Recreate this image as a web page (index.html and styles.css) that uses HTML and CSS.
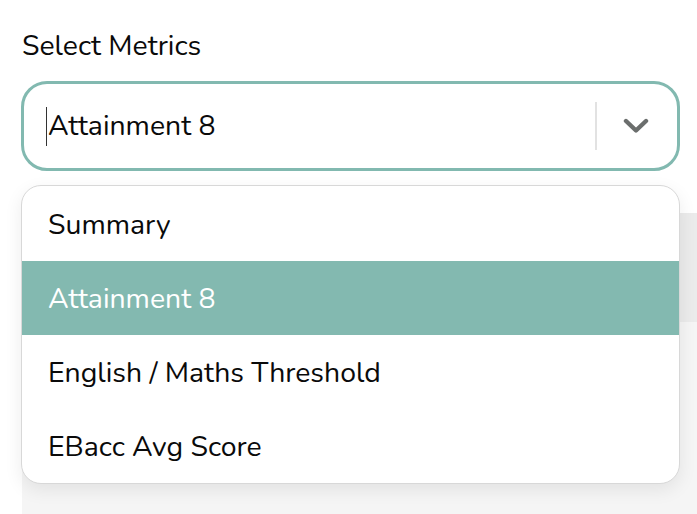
FILE: index.html
```html
<!DOCTYPE html>
<html>
<head>
<meta charset="utf-8">
<link rel="stylesheet" href="styles.css">
</head>
<body>
<div class="field">
  <div class="label">Select Metrics</div>
  <div class="control">
    <div class="value"><span class="caret"></span>Attainment 8</div>
    <span class="sep"></span>
    <span class="indicator">
      <svg width="26" height="16" viewBox="0 0 26 16"><polyline points="3,3 13,12.5 23,3" fill="none" stroke="#6b6e6d" stroke-width="4.4" stroke-linecap="round" stroke-linejoin="round"/></svg>
    </span>
  </div>
  <div class="menu">
    <div class="option">Summary</div>
    <div class="option selected">Attainment 8</div>
    <div class="option">English / Maths Threshold</div>
    <div class="option">EBacc Avg Score</div>
  </div>
</div>
<div class="panel">
  <div class="panel-head"></div>
  <div class="panel-body"></div>
</div>
</body>
</html>
```

FILE: styles.css
```css
html, body {
  margin: 0;
  padding: 0;
  background: #ffffff;
}
body {
  font-family: "Nunito", "Open Sans", "Lato", sans-serif;
  color: #0a0a0a;
  width: 697px;
  height: 514px;
  overflow: hidden;
}
.field {
  position: relative;
  margin: 0 17px 0 21px;
  padding-top: 28px;
}
.label {
  font-size: 28.4px;
  line-height: 36px;
  padding-left: 1px;
  margin-bottom: 17px;
}
.control {
  box-sizing: border-box;
  height: 90px;
  border: 3px solid #82b9b0;
  border-radius: 26px;
  display: flex;
  align-items: center;
  background: #fff;
}
.value {
  flex: 1;
  font-size: 28.4px;
  line-height: 36px;
  padding-left: 22px;
  display: flex;
  align-items: center;
}
.caret {
  display: inline-block;
  width: 1px;
  height: 39px;
  background: #333;
  margin-right: 1px;
}
.sep {
  width: 2px;
  height: 48px;
  background: #e2e2e2;
}
.indicator {
  display: flex;
  align-items: center;
  padding: 0 28px 0 26px;
}
.indicator svg {
  display: block;
}
.menu {
  position: absolute;
  left: 0;
  right: 0;
  top: calc(100% + 14px);
  box-sizing: border-box;
  height: 299px;
  padding-top: 1px;
  background: #fff;
  border: 1px solid #d8d8d8;
  border-radius: 20px;
  overflow: hidden;
  box-shadow: 0 6px 18px rgba(0, 0, 0, 0.08);
  z-index: 2;
}
.option {
  height: 74px;
  display: flex;
  align-items: center;
  padding-left: 26px;
  font-size: 28.4px;
}
.option.selected {
  background: #83b9b0;
  color: #ffffff;
}
.panel {
  margin: 42px 0 0 22px;
  height: 301px;
  background: #f5f5f5;
}
.panel-head {
  height: 109px;
  background: #ebebeb;
}
```
